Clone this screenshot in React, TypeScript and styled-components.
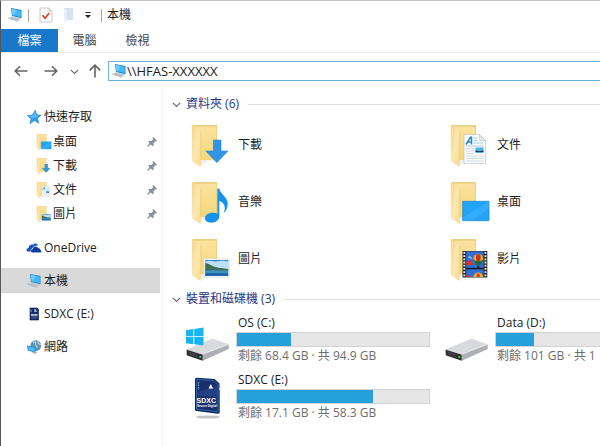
import React, { useState } from "react";
import styled, { createGlobalStyle } from "styled-components";

const GlobalStyle = createGlobalStyle`
  *, *::before, *::after { box-sizing: border-box; }
  body {
    margin: 0;
    overflow: hidden;
    background: #fff;
    color: #1c1c1c;
    font: 12px/18px "Open Sans", "Noto Sans CJK TC", sans-serif;
  }
  button, input { font: inherit; color: inherit; }
  h1, h2, ul { margin: 0; padding: 0; font: inherit; list-style: none; }
  svg { display: block; flex: none; }
`;

/* ---------- layout ---------- */

const Window = styled.div`
  display: flex;
  flex-direction: column;
  min-height: 100vh;
  border-top: 1px solid #c4c4c6;
  border-left: 1px solid #55565c;
  overflow: hidden;
`;

const TitleBar = styled.header`
  display: flex;
  align-items: center;
  height: 28px;
  padding-left: 6px;
`;

const Separator = styled.span`
  width: 1px;
  height: 13px;
  margin: 0 5px;
  background: #a5a5a5;
`;

const PlainButton = styled.button`
  display: flex;
  align-items: center;
  justify-content: center;
  padding: 0;
  border: 0;
  background: none;
  cursor: default;
`;

const QuickButton = styled(PlainButton)`
  width: 23px;
  height: 22px;
`;

const CaretButton = styled(PlainButton)`
  width: 16px;
  height: 22px;
`;

const Title = styled.h1``;

const TabStrip = styled.div`
  display: flex;
  height: 24px;
  border-bottom: 1px solid #ebebeb;
`;

const Tab = styled.button<{ $primary?: boolean }>`
  height: 23px;
  padding: 0 ${(p) => (p.$primary ? 16 : 14)}px;
  border: 0;
  background: ${(p) => (p.$primary ? "#1a78ca" : "transparent")};
  color: ${(p) => (p.$primary ? "#fff" : "#444")};
  min-width: ${(p) => (p.$primary ? 57 : 53)}px;
`;

const NavBar = styled.nav`
  display: flex;
  align-items: center;
  height: 36px;
  padding-left: 5px;
`;

const NavButton = styled(PlainButton)<{ $width: number }>`
  width: ${(p) => p.$width}px;
  height: 24px;
`;

const AddressBox = styled.label`
  display: flex;
  flex: 1;
  align-items: center;
  height: 20px;
  padding-left: 2px;
  border: 1px solid #6fb1d6;
  border-right: 0;
`;

const AddressInput = styled.input`
  flex: 1;
  min-width: 0;
  height: 18px;
  padding: 0;
  border: 0;
  outline: 0;
  background: transparent;
  font-size: 13px;
`;

const Body = styled.div`
  display: flex;
  flex: 1;
`;

const Sidebar = styled.aside`
  display: flex;
  flex: none;
  flex-direction: column;
  gap: 8px;
  width: 162px;
  padding: 15px 2px 0 0;
  border-right: 1px solid #f3f3f3;
`;

const QuickAccess = styled.div`
  padding-bottom: 1px;
`;

const PinnedList = styled.div`
  padding-top: 1px;
`;

const SideLink = styled.a<{ $nested?: boolean; $selected?: boolean }>`
  display: flex;
  align-items: center;
  gap: ${(p) => (p.$nested ? 1 : 2)}px;
  height: ${(p) => (p.$nested ? 24 : 25)}px;
  padding-right: 2px;
  padding-left: ${(p) => (p.$nested ? 35 : 25)}px;
  background: ${(p) => (p.$selected ? "#d9d9d9" : "transparent")};
  color: inherit;
  text-decoration: none;
`;

const SideLabel = styled.span`
  flex: 1;
`;

const Content = styled.main`
  flex: 1;
  min-width: 0;
  padding-top: 3px;
  overflow: hidden;
`;

const GroupHeading = styled.h2`
  display: flex;
  align-items: center;
  gap: 9px;
  height: 24px;
  padding-left: 9px;
  color: #27357f;

  &::after {
    content: "";
    flex: 1;
    height: 1px;
    background: #dedede;
  }
`;

const GroupToggle = styled(PlainButton)`
  gap: 5px;
  height: 24px;
`;

const TileGrid = styled.ul`
  display: grid;
  grid-template-columns: repeat(2, 259px);
  grid-auto-rows: 57px;
  padding-left: 21px;
`;

const FolderTile = styled.li`
  display: flex;
  align-items: center;
  gap: 6px;
  padding-left: 6px;
`;

const FolderArt = styled.span`
  padding-top: 3px;
`;

const DriveTile = styled.li`
  display: flex;
  gap: 6px;
`;

const DriveArt = styled.span`
  padding-top: 8px;
`;

const DriveInfo = styled.div`
  width: 194px;
  white-space: nowrap;
`;

const DriveName = styled.div`
  padding: 3px 2px 0;
`;

const DriveNote = styled.div`
  padding: 0 2px;
  color: #6d6d6d;
`;

const Meter = styled.div`
  height: 15px;
  border: 1px solid #d2d2d2;
  background: #e6e6e6;
`;

const MeterFill = styled.div`
  height: 100%;
  background: #26a0da;
`;

/* ---------- icons ---------- */

type Kind = "download" | "document" | "music" | "desktop" | "picture" | "video";

const Computer = () => (
  <svg width="16" height="16" viewBox="0 0 16 16" aria-hidden="true">
    <path d="M4 1 14.5 3v8.2L5 9Z" fill="#1686cb" />
    <path d="M4.8 1.9 13.8 3.7v6.4L5.7 8.3Z" fill="#45b9f5" />
    <path d="m4.8 1.9 5 1L6.3 8.4l-.6-.1Z" fill="#72cffb" />
    <path d="m1 11 4-1.8 8.5 2.3-3.2 2.7Z" fill="#d3d9dd" />
    <path d="m1 11 9.3 3.2 3.2-2.7M3 10.8l7.2 2.2M4.5 10l7.2 2" fill="none" stroke="#9aa5ac" strokeWidth=".6" />
  </svg>
);

const Star = () => (
  <svg width="16" height="16" viewBox="0 0 16 16" aria-hidden="true">
    <path d="m9.3 1.2 1.3 4.6 4.6.4-3.7 3 1.3 5-4.5-2.6-4.3 3.2 1.1-4.9L1.4 6.6l4.7-.4Z" fill="#2a9df0" stroke="#1c7ecb" strokeWidth=".6" />
    <path d="m9 2.8 1 3.7 3.4.4-6.9 2.4-3.4-2 3.6-.4Z" fill="#5cbcfa" />
  </svg>
);

const Cloud = () => (
  <svg width="16" height="16" viewBox="0 0 16 16" aria-hidden="true">
    <path d="M1 11.5C-.2 9.8 1 8 2.6 7.9 2.7 5.5 5 4 7.2 4.7 8.2 2.9 11 3 12 5.2L9 6 6 8.5 5.2 11.5Z" fill="#1651b5" />
    <path d="M6.4 12.8C3.9 12.5 4.1 9.2 6.5 9.1 6.7 6 11.2 5.2 12.4 8 14 7.9 14.6 9.3 14.4 9.9 16.3 10.2 16 12.7 14.3 12.8Z" fill="#0b3b98" stroke="#fff" strokeWidth=".6" />
  </svg>
);

const MiniCard = () => (
  <svg width="16" height="16" viewBox="0 0 16 16" aria-hidden="true">
    <path d="M4 2h7l1.5 1.5V14H4Z" fill="#16306f" stroke="#0b1d4c" strokeWidth=".6" />
    <path d="M5 3.5v2.5M9 3l1.5 2.5H8.5Z" stroke="#b7c7ec" strokeWidth=".7" fill="#b7c7ec" />
    <path d="M5 8.5h6.5M5 9.7h6.5" stroke="#dfe7fa" strokeWidth=".8" />
    <path d="M5.5 12h5.5" stroke="#6e87c9" strokeWidth=".6" />
  </svg>
);

const Network = () => (
  <svg width="16" height="16" viewBox="0 0 16 16" aria-hidden="true">
    <circle cx="9.8" cy="6.6" r="5.4" fill="#5b93b5" />
    <path d="M7 3.5c2-1.500 3 0 2.500 1.500S12 7 11 9M12 2.500c-.5 2 1 2 2.500 3.500" fill="none" stroke="#c4dfea" strokeWidth="1.200" />
    <path d="m1 6.500 8.500 1.700v5.600L1.800 11.500Z" fill="#1685cc" />
    <path d="m1.800 7.400 7 1.400v4L2.500 11Z" fill="#4dbdf5" />
    <path d="m5 13.200 4 1.800 2.500-1.800-2-.6Z" fill="#a9b4ba" />
  </svg>
);

const Pin = () => (
  <svg width="12" height="12" viewBox="0 0 12 12" aria-hidden="true">
    <path d="m7.3 1 3.700 3.700-.9.900-.8-.3-1.700 1.900v2.200l-.9.900L2.300 5.900l.9-.9h2.300l1.600-1.700-.6-1.500ZM3.800 6.800l1.400 1.400L1.400 11H1v-.4Z" fill="#86929b" />
  </svg>
);

const Chevron = () => (
  <svg width="9" height="9" viewBox="0 0 9 9" fill="none" stroke="#6c6c6c" strokeWidth="1.2" aria-hidden="true">
    <path d="m.8 2.8 3.700 3.700 3.700-3.700" />
  </svg>
);

const Arrow = ({ d }: { d: string }) => (
  <svg width="16" height="16" viewBox="0 0 16 16" fill="none" stroke="#646464" strokeWidth="1.6" aria-hidden="true">
    <path d={d} />
  </svg>
);

const CheckedPage = () => (
  <svg width="14" height="16" viewBox="0 0 14 16" aria-hidden="true">
    <path d="M1 1h9l3 3v11H1Z" fill="#fafafa" stroke="#c2c2c2" strokeWidth=".8" />
    <path d="M10 1v3h3" fill="#e8e8e8" stroke="#c2c2c2" strokeWidth=".8" />
    <path d="m3.500 8.300 2.500 2.900L10.300 6" fill="none" stroke="#d9401f" strokeWidth="1.600" />
  </svg>
);

const PaleFolder = () => (
  <svg width="12" height="16" viewBox="0 0 12 16" aria-hidden="true">
    <path d="M1 1h9v12H1Z" fill="#d5e1f4" />
    <path d="m1 1 3 2v12l-3-2Z" fill="#e8eff9" />
  </svg>
);

const Caret = () => (
  <svg width="8" height="8" viewBox="0 0 8 8" aria-hidden="true">
    <path d="M1.500 1h5v1h-5ZM1 4h6L4 7Z" fill="#222" />
  </svg>
);

const overlays: Record<Kind, React.ReactNode> = {
  download: <path d="M23.300 16H31v11h7L26.900 38.700 15.700 27h7.600Z" fill="#3393e6" stroke="#207fd0" strokeWidth=".5" />,
  music: (
    <path
      d="M27.300 7.500h2c.4 5 8.400 8.500 8.400 15.500 0 4-1.500 7-4.200 9 3.500-7-.5-11-4.200-12v15c0 4-3.600 6.700-8.100 6.700-3.700 0-6.200-1.700-6.200-4.400 0-3.200 3.200-5.600 7.500-5.600 1.800 0 3.500.3 4.800 1.100Z"
      fill="#1592ee"
    />
  ),
  desktop: (
    <>
      <path d="M13.700 20.300H40v19.400H13.700Z" fill="#22a4fb" stroke="#0f82d6" strokeWidth=".7" />
      <path d="M40 20.300v8L22 39.700h-8.300V37Z" fill="#3eb2ff" opacity=".6" />
    </>
  ),
  picture: (
    <>
      <path d="M14 20.800h25.300v18.500H14Z" fill="#fff" stroke="#c9ced2" strokeWidth=".6" />
      <path d="M15.200 22h23v16h-23Z" fill="#2b83cf" />
      <path d="M15.200 23.500c4-1.500 6 0 10 0s8-1.500 13 0v7.500h-23Z" fill="#bfe0f6" />
      <path d="M15.200 25c4 .5 7 3.500 12 4.500 4 .6 8 1 11 1.500v2h-23Z" fill="#3d6f55" />
      <path d="M15.200 32.500c7-.8 15 .3 23-.3V35h-23Z" fill="#3f93c0" />
      <path d="M15.200 35.500c7-.8 15 0 23-.5v3h-23Z" fill="#1f66a3" />
    </>
  ),
  document: (
    <>
      <path d="M15 10.500h15.500l6 6v23H15Z" fill="#fbfbfc" stroke="#bfc3c8" strokeWidth=".7" />
      <path d="M30.500 10.500v6h6Z" fill="#e2e5e9" stroke="#bfc3c8" strokeWidth=".6" />
      <path d="m17 20.500 4.500-7.200h1v7.200M18.800 18h3.700" fill="none" stroke="#2286c9" strokeWidth="1.500" />
      <path d="M24.500 14h4M24.500 16.500h4M24.500 19h9.500M17 22h17.500" stroke="#8fc7e8" strokeWidth=".8" />
      <path d="M17 24.500h8M17 27h8M17 29.500h8M17 32h17.500M17 34.500h17.500M17 37h17.500" stroke="#ccd3d9" strokeWidth=".8" />
      <path d="M26.500 23.500h8v5.500h-8Z" fill="#4eb0e8" />
      <path d="m26.500 26.500 4 .8 4-.8V28h-8Z" fill="#1b3e57" />
    </>
  ),
  video: (
    <>
      <path d="M13.500 13H38.300v26.500H13.500Z" fill="#26272b" />
      <path d="M17.200 13.500h17.400v25.500H17.200Z" fill="#2f6fd6" />
      <path d="M15.300 14v25M36.500 14v25" stroke="#e9e9e9" strokeWidth="1.900" strokeDasharray="1.800 1.400" />
      <path d="M17.200 24.500c2-3 4-3.500 5.500-1l2 3.500h-7.500Z" fill="#d8342c" />
      <path d="M18.500 19.500c2.500-2.500 4-.5 5 1.500Z" fill="#8fc2f5" />
      <ellipse cx="29.300" cy="20.500" rx="4.800" ry="4.600" fill="#e8b323" />
      <path d="M27.500 16.300c-1 3-.5 6 .7 9.200h2.300c1.200-3.200 1.500-6.200.6-9.200Z" fill="#c8322b" />
      <path d="M24.500 21.500c3 2.500 6.500 2.500 9.600 0L31 27.500h-3.300Z" fill="#1f6b38" />
      <path d="M28.200 28h2.200v2h-2.200Z" fill="#4b2818" />
      <path d="M17.200 29.800h17.400v1.500H17.200Z" fill="#17181a" />
      <path d="M24.500 39c0-6 9.500-6 9.500 0Z" fill="#e8b323" />
      <path d="M27.500 39c0-5 3.500-5 3.500 0ZM17.200 36.500l5.500 2.500h-5.500Z" fill="#d8342c" />
    </>
  ),
};

const Folder = ({ kind, width, height }: { kind: Kind; width: number; height: number }) => (
  <svg width={width} height={height} viewBox="0 0 42 45" aria-hidden="true">
    <defs>
      <linearGradient id={`flap-${kind}-${width}`} x1="0" y1="0" x2="1" y2="1">
        <stop offset="0" stopColor="#f3d68b" />
        <stop offset=".5" stopColor="#fbe7ae" />
        <stop offset="1" stopColor="#f8dd92" />
      </linearGradient>
      <linearGradient id={`back-${kind}-${width}`} x1="0" y1="0" x2="0" y2="1">
        <stop offset="0" stopColor="#fae3a0" />
        <stop offset="1" stopColor="#f6d779" />
      </linearGradient>
    </defs>
    <path d="M2 1.500h25v34.800H11l-9 .7Z" fill={`url(#back-${kind}-${width})`} />
    <path d="M2 1.200h25v1.200H4.500Z" fill="#e6c469" />
    <path d="M26.300 2v34.300h.7V2Z" fill="#eac971" />
    <path d="M10.500 36.300h6v2.500l-6 2.700Z" fill="#eef0f1" />
    <path d="M1.800 1.500 9.900 6.200c.7.400 1 .8 1 1.500v34.500c0 .6-.4.800-.9.500L1.800 37.200Z" fill={`url(#flap-${kind}-${width})`} />
    <path d="M10.900 7.700v28.600" stroke="#e6c469" strokeWidth=".7" />
    {overlays[kind]}
  </svg>
);

const DiskDrive = ({ system }: { system?: boolean }) => (
  <svg width="46" height="44" viewBox="0 -6 46 44" aria-hidden="true">
    <path d="m2.700 24.300 25-10.300c.6-.3 1.200-.2 1.800 0l15.200 5.300-26 10Z" fill="#d9dadd" />
    <path d="m18.700 29.300 26-10V24l-26 11.700Z" fill="#adafb4" />
    <path d="m2.700 24.300 16 5v6.400l-16-5.400Z" fill="#2b2c2f" />
    <path d="m2.700 24.300 16 5 26-10" fill="none" stroke="#f2f2f3" strokeWidth=".7" />
    <path d="m4.500 27 9 3M4.500 28.700l9 3" stroke="#55575b" strokeWidth=".7" />
    <path d="m15.300 30.800 2 .6v1.600l-2-.6Z" fill="#43e04a" />
    {system && (
      <path d="m2 5.200 7.300-1.200v7.200H2Zm8.200-1.300 9.300-1.500v8.800h-9.300ZM2 12h7.300v7.200L2 18.200Zm8.200 0h9.300v8.500l-9.300-1.200Z" fill="#18b4f1" />
    )}
  </svg>
);

const CardLabel = styled.text`
  fill: #fff;
  font-family: "Liberation Sans", sans-serif;
  font-weight: 700;
`;

const MemoryCard = () => (
  <svg width="46" height="44" viewBox="0 0 46 44" aria-hidden="true">
    <ellipse cx="24" cy="41" rx="12" ry="1.600" fill="#a9a9a9" opacity=".7" />
    <path d="M13 1.800 30.500 3l5 4.500v5l-.6.800.8 1V37l-1.700.8-21.500-2.800c-1-.2-1.500-.6-1.500-1.500V4C11 2.500 11.700 1.700 13 1.800Z" fill="#0b2559" />
    <path d="m12.800 3.300 17 1.200 4.300 4v27.300L12.500 33.200Z" fill="#17306f" stroke="#4187c9" strokeWidth=".7" />
    <path d="m13 16 20.500-6v11L13 20Z" fill="#2c4b93" opacity=".6" />
    <path d="M14.700 6v8" stroke="#9fb4de" strokeWidth="1" strokeDasharray="1.500 1" />
    <path d="m26.800 8 2.300 4.500h-4.600Z" fill="#fff" />
    <CardLabel x="12.500" y="26.500" fontSize="7">SDXC</CardLabel>
    <CardLabel x="13" y="31" fontSize="3">Secure Digital</CardLabel>
  </svg>
);

/* ---------- data ---------- */

const pinned: { label: string; kind: Kind }[] = [
  { label: "桌面", kind: "desktop" },
  { label: "下載", kind: "download" },
  { label: "文件", kind: "document" },
  { label: "圖片", kind: "picture" },
];

const folders: { label: string; kind: Kind }[] = [
  { label: "下載", kind: "download" },
  { label: "文件", kind: "document" },
  { label: "音樂", kind: "music" },
  { label: "桌面", kind: "desktop" },
  { label: "圖片", kind: "picture" },
  { label: "影片", kind: "video" },
];

const drives = [
  { name: "OS (C:)", note: "剩餘 68.4 GB · 共 94.9 GB", used: 28, art: <DiskDrive system /> },
  { name: "Data (D:)", note: "剩餘 101 GB · 共 1", used: 20, art: <DiskDrive /> },
  { name: "SDXC (E:)", note: "剩餘 17.1 GB · 共 58.3 GB", used: 71, art: <MemoryCard /> },
];

export default function App() {
  const [address, setAddress] = useState("\\\\HFAS-XXXXXX");

  return (
    <>
      <GlobalStyle />
      <Window>
        <TitleBar>
          <Computer />
          <Separator />
          <QuickButton aria-label="內容"><CheckedPage /></QuickButton>
          <QuickButton aria-label="新增資料夾"><PaleFolder /></QuickButton>
          <CaretButton aria-label="自訂快速存取工具列"><Caret /></CaretButton>
          <Separator />
          <Title>本機</Title>
        </TitleBar>
        <TabStrip>
          <Tab $primary>檔案</Tab>
          <Tab>電腦</Tab>
          <Tab>檢視</Tab>
        </TabStrip>
        <NavBar>
          <NavButton $width={30} aria-label="上一頁"><Arrow d="M14.500 8H2.200M7 3.200 2.200 8 7 12.800" /></NavButton>
          <NavButton $width={30} aria-label="下一頁"><Arrow d="M1.500 8h12.300M9 3.200 13.800 8 9 12.800" /></NavButton>
          <NavButton $width={16} aria-label="最近的位置"><Chevron /></NavButton>
          <NavButton $width={26} aria-label="上移"><Arrow d="M8 14.500V2.200M2.800 7.400 8 2.200l5.200 5.200" /></NavButton>
          <AddressBox>
            <Computer />
            <AddressInput aria-label="網址" value={address} onChange={(e) => setAddress(e.target.value)} />
          </AddressBox>
        </NavBar>
        <Body>
          <Sidebar>
            <QuickAccess>
              <SideLink href="#quick"><Star /><SideLabel>快速存取</SideLabel></SideLink>
              <PinnedList>
                {pinned.map((p) => (
                  <SideLink key={p.label} href={`#${p.kind}`} $nested>
                    <Folder kind={p.kind} width={16} height={17} />
                    <SideLabel>{p.label}</SideLabel>
                    <Pin />
                  </SideLink>
                ))}
              </PinnedList>
            </QuickAccess>
            <SideLink href="#onedrive"><Cloud /><SideLabel>OneDrive</SideLabel></SideLink>
            <SideLink href="#computer" $selected><Computer /><SideLabel>本機</SideLabel></SideLink>
            <SideLink href="#sdxc"><MiniCard /><SideLabel>SDXC (E:)</SideLabel></SideLink>
            <SideLink href="#network"><Network /><SideLabel>網路</SideLabel></SideLink>
          </Sidebar>
          <Content>
            <GroupHeading>
              <GroupToggle aria-expanded="true"><Chevron />資料夾 (6)</GroupToggle>
            </GroupHeading>
            <TileGrid>
              {folders.map((f) => (
                <FolderTile key={f.label}>
                  <FolderArt><Folder kind={f.kind} width={42} height={45} /></FolderArt>
                  {f.label}
                </FolderTile>
              ))}
            </TileGrid>
            <GroupHeading>
              <GroupToggle aria-expanded="true"><Chevron />裝置和磁碟機 (3)</GroupToggle>
            </GroupHeading>
            <TileGrid>
              {drives.map((d) => (
                <DriveTile key={d.name}>
                  <DriveArt>{d.art}</DriveArt>
                  <DriveInfo>
                    <DriveName>{d.name}</DriveName>
                    <Meter role="meter" aria-label={d.name} aria-valuemin={0} aria-valuemax={100} aria-valuenow={d.used}>
                      <MeterFill style={{ width: `${d.used}%` }} />
                    </Meter>
                    <DriveNote>{d.note}</DriveNote>
                  </DriveInfo>
                </DriveTile>
              ))}
            </TileGrid>
          </Content>
        </Body>
      </Window>
    </>
  );
}
